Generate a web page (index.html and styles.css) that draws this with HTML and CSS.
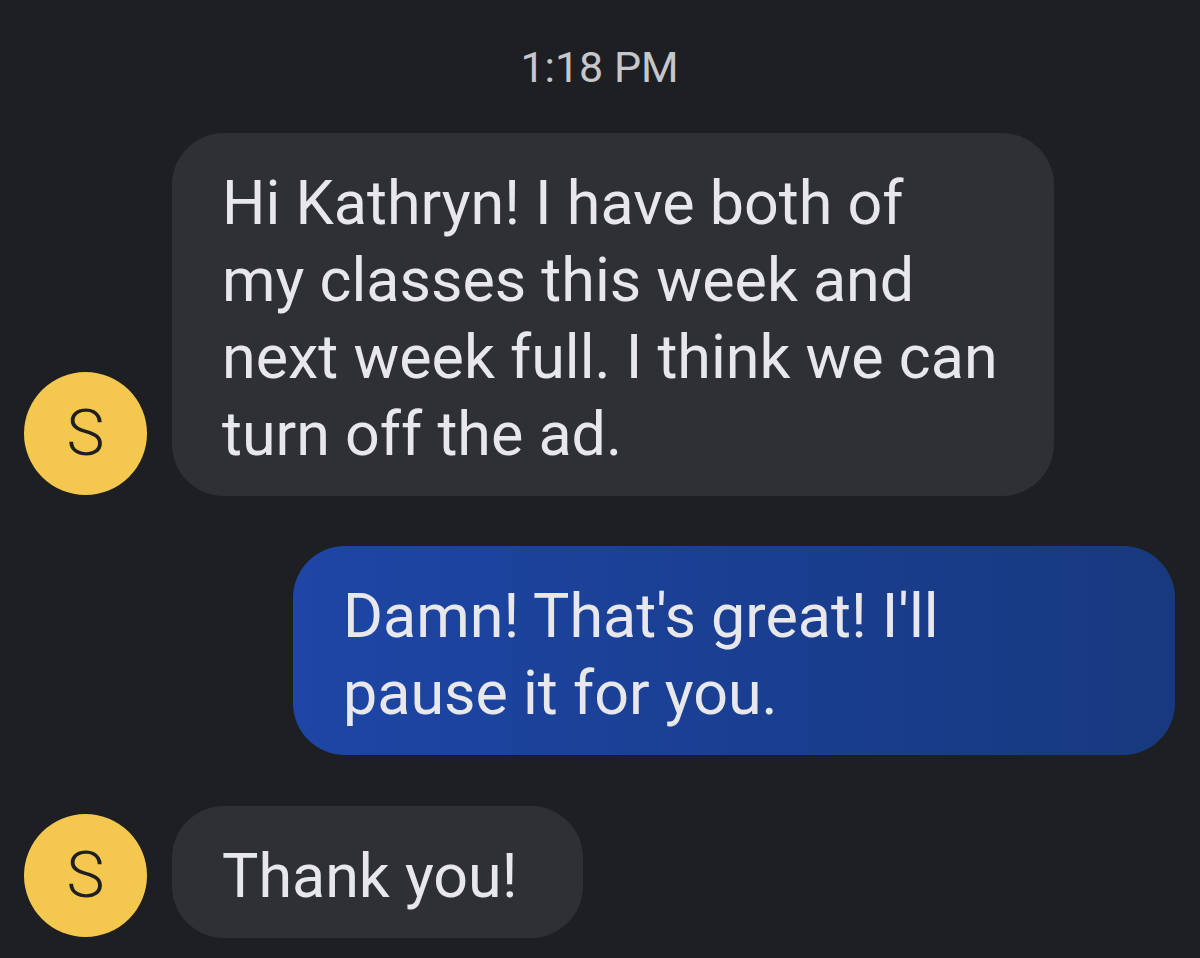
FILE: index.html
```html
<!DOCTYPE html>
<html lang="en">
<head>
  <meta charset="UTF-8" />
  <meta name="viewport" content="width=device-width, initial-scale=1.0"/>
  <title>Messages</title>
  <link rel="stylesheet" href="styles.css">
</head>
<body>

<div class="thread">
  <div class="timestamp">1:18 PM</div>

  <div class="row incoming">
    <div class="avatar">S</div>
    <div class="bubble received wide">Hi Kathryn! I have both of<br>my classes this week and<br>next week full. I think we can<br>turn off the ad.</div>
  </div>

  <div class="row outgoing">
    <div class="bubble sent wide">Damn! That's great! I'll<br>pause it for you.</div>
  </div>

  <div class="row incoming">
    <div class="avatar">S</div>
    <div class="bubble received short">Thank you!</div>
  </div>
</div>

</body>
</html>
```

FILE: styles.css
```css
body {
  margin: 0;
  padding: 0;
  background: #1e1f23;
  font-family: Roboto, 'Noto Sans', sans-serif;
  color: #e8e8ec;
}
.thread {
  display: flex;
  flex-direction: column;
  padding: 41px 25px 0 24px;
}
.timestamp {
  text-align: center;
  font-size: 43px;
  line-height: 52px;
  color: #c6c7cb;
  margin-bottom: 40px;
}
.row {
  display: flex;
  align-items: flex-end;
  gap: 25px;
  margin-bottom: 50px;
}
.row:last-child {
  margin-top: 1px;
}
.outgoing {
  justify-content: flex-end;
}
.avatar {
  width: 123px;
  height: 123px;
  border-radius: 50%;
  background: #f4c84f;
  color: #1f1f22;
  font-size: 64px;
  font-weight: 300;
  display: flex;
  align-items: center;
  justify-content: center;
  flex-shrink: 0;
  margin-bottom: 1px;
}
.bubble {
  font-size: 61px;
  line-height: 77px;
  padding: 32px 50px 23px;
  border-radius: 52px;
  box-sizing: border-box;
  white-space: nowrap;
}
.wide {
  width: 882px;
}
.short {
  padding-right: 66px;
}
.received {
  background: #2f3036;
}
.sent {
  background: linear-gradient(90deg, #1d46a6 0%, #1a3f92 50%, #17397f 100%);
}
```
